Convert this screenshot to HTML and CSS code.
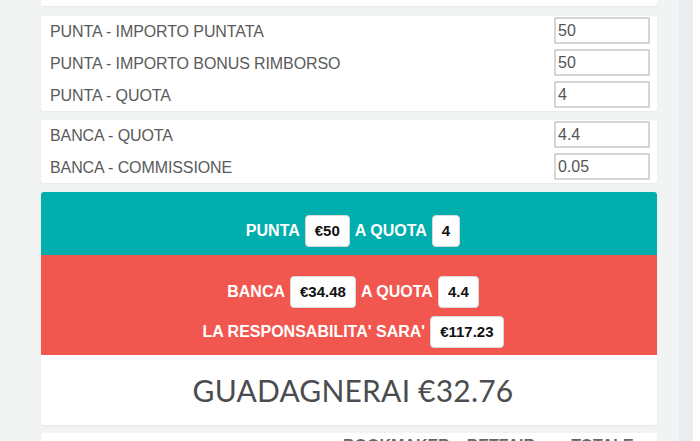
FILE: index.html
```html
<!DOCTYPE html>
<html lang="it">
<head>
    <meta charset="UTF-8">
    <meta name="viewport" content="width=device-width, initial-scale=1.0">
    <title>Calcolatore Rimborso</title>
    <link rel="stylesheet" href="styles.css">
</head>
<body>
    <div class="layout">
        <main class="page">
            <div class="card card-top"></div>

            <div class="card form-card">
                <div class="form-row">
                    <label>PUNTA - IMPORTO PUNTATA</label>
                    <input type="text" value="50">
                </div>
                <div class="form-row">
                    <label>PUNTA - IMPORTO BONUS RIMBORSO</label>
                    <input type="text" value="50">
                </div>
                <div class="form-row">
                    <label>PUNTA - QUOTA</label>
                    <input type="text" value="4">
                </div>
            </div>

            <div class="card form-card">
                <div class="form-row">
                    <label>BANCA - QUOTA</label>
                    <input type="text" value="4.4">
                </div>
                <div class="form-row">
                    <label>BANCA - COMMISSIONE</label>
                    <input type="text" value="0.05">
                </div>
            </div>

            <div class="result">
                <div class="result-back">
                    <p class="result-line">PUNTA <span class="pill">€50</span> A QUOTA <span class="pill">4</span></p>
                </div>
                <div class="result-lay">
                    <p class="result-line">BANCA <span class="pill">€34.48</span> A QUOTA <span class="pill">4.4</span></p>
                    <p class="result-line">LA RESPONSABILITA' SARA' <span class="pill">€117.23</span></p>
                </div>
                <div class="result-profit">GUADAGNERAI €32.76</div>
            </div>

            <div class="card table-card">
                <div class="table-head">
                    <span class="col-bookmaker">BOOKMAKER</span>
                    <span class="col-betfair">BETFAIR</span>
                    <span class="col-totale">TOTALE</span>
                </div>
            </div>
        </main>
        <div class="scroll-strip"></div>
        <div class="edge"></div>
    </div>
</body>
</html>
```

FILE: styles.css
```css
* {
    margin: 0;
    padding: 0;
    box-sizing: border-box;
}

body {
    font-family: "Liberation Sans", Arial, sans-serif;
    background-color: #f2f3f3;
    overflow: hidden;
}

.layout {
    display: flex;
    height: 441px;
}

.page {
    width: 679px;
    flex-shrink: 0;
    padding: 0 22px 0 41px;
    display: flex;
    flex-direction: column;
}

.page > * {
    flex-shrink: 0;
}

.scroll-strip {
    width: 14px;
    flex-shrink: 0;
    background-color: #e9edf0;
}

.edge {
    flex: 1;
    background-color: #fdfdfd;
}

.card {
    background-color: white;
    border-radius: 3px;
    box-shadow: 0 1px 2px rgba(0, 0, 0, 0.05);
}

.card-top {
    height: 6px;
    margin-bottom: 10px;
    border-radius: 0 0 3px 3px;
}

.form-card {
    padding: 1px 7px 3px 9px;
    margin-bottom: 9px;
    display: flex;
    flex-direction: column;
    gap: 5px;
}

.form-row {
    display: flex;
    justify-content: space-between;
    align-items: center;
    height: 27px;
}

.form-row label {
    font-size: 16px;
    color: #5a5a5a;
    letter-spacing: -0.1px;
    padding-top: 2px;
}

.form-row input {
    width: 96px;
    height: 27px;
    border: 2px solid #d6d6d6;
    border-radius: 1px;
    padding: 0 2px;
    font-family: "Liberation Sans", Arial, sans-serif;
    font-size: 16px;
    color: #555;
    background-color: white;
}

/* Risultato */
.result {
    border-radius: 3px;
    overflow: hidden;
    box-shadow: 0 1px 2px rgba(0, 0, 0, 0.05);
    margin-bottom: 8px;
}

.result-back {
    background-color: #00aeae;
    padding: 23px 0 8px 8px;
}

.result-lay {
    background-color: #f1574f;
    padding: 21px 0 7px 8px;
    display: flex;
    flex-direction: column;
    gap: 8px;
}

.result-line {
    display: flex;
    justify-content: center;
    align-items: center;
    gap: 5px;
    color: white;
    font-weight: bold;
    font-size: 16px;
}

.pill {
    display: inline-block;
    background-color: white;
    color: #111;
    border: 1px solid #d9d9d9;
    border-radius: 4px;
    padding: 6px 9px;
    line-height: 18px;
    font-size: 15px;
}

.result-profit {
    background-color: white;
    height: 70px;
    display: flex;
    align-items: center;
    justify-content: center;
    padding-left: 8px;
    font-family: Lato, "Noto Sans", sans-serif;
    font-size: 30px;
    letter-spacing: 0.2px;
    color: #4a4d50;
}

.table-card {
    flex: 1;
}

.table-head {
    display: flex;
    padding: 4px 0 0 302px;
    font-weight: bold;
    font-size: 16px;
    color: #666;
}

.col-betfair {
    margin-left: 17px;
}

.col-totale {
    margin-left: 36px;
}
```
